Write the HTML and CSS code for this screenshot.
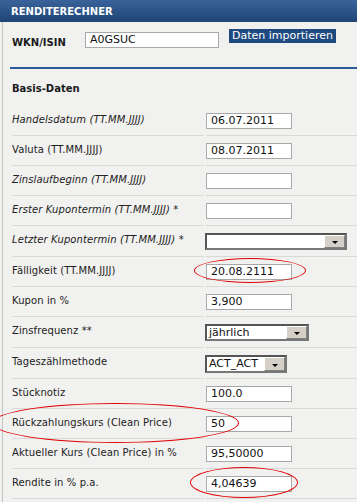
FILE: index.html
```html
<!DOCTYPE html>
<html>
<head>
<meta charset="utf-8">
<link rel="stylesheet" href="styles.css">
</head>
<body>
<div class="header">RENDITERECHNER</div>
<div class="panel">
  <div class="wkn">
    <span class="wkn-label">WKN/ISIN</span>
    <div class="field wkn-field">A0GSUC</div>
    <span class="btn">Daten importieren</span>
  </div>
  <div class="rule"></div>
  <div class="section">Basis-Daten</div>
  <div class="grid">
    <div class="lab it">Handelsdatum (TT.MM.JJJJ)</div>
    <div class="val"><div class="field">06.07.2011</div></div>

    <div class="lab">Valuta (TT.MM.JJJJ)</div>
    <div class="val"><div class="field">08.07.2011</div></div>

    <div class="lab it">Zinslaufbeginn (TT.MM.JJJJ)</div>
    <div class="val"><div class="field"></div></div>

    <div class="lab it">Erster Kupontermin (TT.MM.JJJJ) *</div>
    <div class="val"><div class="field"></div></div>

    <div class="lab it tall">Letzter Kupontermin (TT.MM.JJJJ) *</div>
    <div class="val tall"><div class="sel w142"><span class="opt"></span><span class="arr"><i></i></span></div></div>

    <div class="lab">Fälligkeit (TT.MM.JJJJ)</div>
    <div class="val"><div class="field">20.08.2111</div></div>

    <div class="lab">Kupon in %</div>
    <div class="val"><div class="field">3,900</div></div>

    <div class="lab tall">Zinsfrequenz **</div>
    <div class="val tall"><div class="sel w104"><span class="opt">jährlich</span><span class="arr"><i></i></span></div></div>

    <div class="lab tall">Tageszählmethode</div>
    <div class="val tall"><div class="sel w82"><span class="opt">ACT_ACT</span><span class="arr"><i></i></span></div></div>

    <div class="lab">Stücknotiz</div>
    <div class="val"><div class="field">100.0</div></div>

    <div class="lab">Rückzahlungskurs (Clean Price)</div>
    <div class="val"><div class="field">50</div></div>

    <div class="lab">Aktueller Kurs (Clean Price) in %</div>
    <div class="val"><div class="field">95,50000</div></div>

    <div class="lab">Rendite in % p.a.</div>
    <div class="val"><div class="field">4,04639</div></div>
  </div>
</div>
<div class="mark m1"></div>
<div class="mark m2"></div>
<div class="mark m3"></div>
</body>
</html>
```
FILE: styles.css
```css
html, body {
  margin: 0;
  padding: 0;
}
body {
  background: #f1f1ef;
  font-family: "DejaVu Sans", Verdana, sans-serif;
  font-size: 10px;
  color: #222;
  width: 357px;
  height: 502px;
  overflow: hidden;
  position: relative;
}
.header {
  height: 22px;
  background: linear-gradient(#3a639b, #1e4575);
  color: #fff;
  font-weight: bold;
  font-size: 10px;
  line-height: 24px;
  padding-left: 11px;
}
.panel {
  margin-left: 2px;
  border-left: 1px solid #c4c4c4;
  height: 480px;
}
.wkn {
  display: flex;
  align-items: flex-start;
  padding-top: 7px;
  padding-left: 9px;
  height: 38px;
}
.wkn-label {
  font-weight: bold;
  width: 73px;
  margin-top: 8px;
  line-height: 12px;
  color: #1a1a1a;
}
.field {
  box-sizing: border-box;
  width: 86px;
  height: 16px;
  border: 1px solid #a8a8a8;
  background: #fff;
  font-size: 11px;
  line-height: 14px;
  padding-left: 4px;
  color: #111;
  white-space: nowrap;
}
.wkn-field {
  width: 134px;
  margin-top: 3px;
}
.btn {
  margin-left: 10px;
  background: #1f4a80;
  color: #fff;
  font-size: 11px;
  line-height: 14px;
  height: 14px;
  padding: 0 3px 0 3px;
}
.rule {
  margin-left: 7px;
  height: 2px;
  background: #2d5b95;
}
.section {
  font-weight: bold;
  padding-left: 9px;
  padding-top: 14px;
  line-height: 12px;
  height: 23px;
  color: #1a1a1a;
}
.grid {
  display: grid;
  grid-template-columns: 192px 1fr;
  column-gap: 2px;
  margin-left: 9px;
}
.lab, .val {
  height: 30px;
  border-bottom: 1px solid #d9d9d7;
  box-sizing: border-box;
}
.lab {
  line-height: 12px;
  padding-top: 8px;
  white-space: nowrap;
  letter-spacing: 0.1px;
}
.val {
  padding-top: 7px;
}
.lab.tall, .val.tall {
  height: 31px;
}
.it {
  font-style: italic;
}
.sel {
  box-sizing: border-box;
  display: flex;
  height: 17px;
  margin-left: -1px;
  border: 2px solid;
  border-color: #555 #777 #777 #555;
  background: #fff;
}
.w142 { width: 142px; }
.w104 { width: 104px; }
.w82 { width: 82px; height: 18px; }
.opt {
  flex: 1;
  font-size: 11px;
  line-height: 13px;
  padding-left: 2px;
  color: #111;
  white-space: nowrap;
}
.arr {
  box-sizing: border-box;
  width: 21px;
  background: #d4d0c8;
  border: 1px solid;
  border-color: #fff #808080 #808080 #fff;
  display: flex;
  align-items: center;
  justify-content: center;
}
.arr i {
  display: block;
  width: 0;
  height: 0;
  border-left: 3px solid transparent;
  border-right: 3px solid transparent;
  border-top: 3px solid #000;
  margin-top: 2px;
}
.mark {
  position: absolute;
  border: 1px solid #e00000;
  border-radius: 50%;
  box-sizing: border-box;
}
.m1 { left: 194px; top: 258px; width: 112px; height: 25px; }
.m2 { left: -8px; top: 403px; width: 247px; height: 40px; }
.m3 { left: 190px; top: 467px; width: 108px; height: 31px; }
```
